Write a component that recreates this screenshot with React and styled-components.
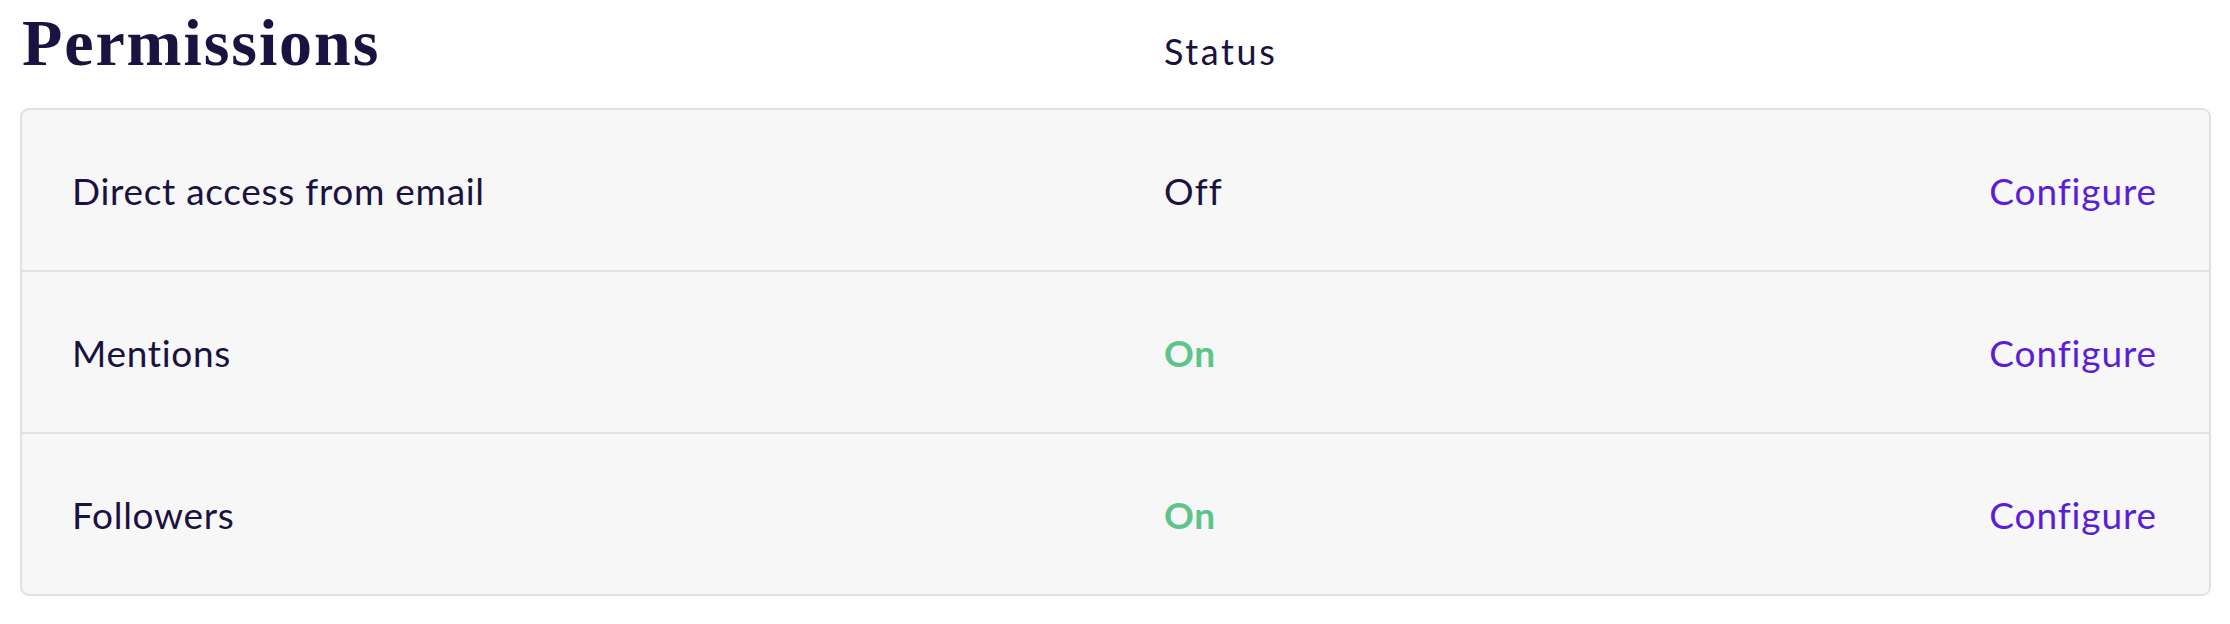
import React from "react";
import styled, { createGlobalStyle } from "styled-components";

const GlobalStyle = createGlobalStyle`
  html, body {
    margin: 0;
    padding: 0;
    background: #ffffff;
  }
  body {
    font-family: "Lato", "Liberation Sans", sans-serif;
    color: #1a1240;
  }
`;

const NAME_COL = 1092;
const ROW_PAD_LEFT = 50;
const BORDER = 2;

const Page = styled.div`
  padding: 0 19px 0 20px;
`;

const Header = styled.header`
  display: grid;
  grid-template-columns: ${NAME_COL + ROW_PAD_LEFT + BORDER}px 1fr;
  align-items: baseline;
  height: 108px;
  box-sizing: border-box;
  padding-top: 3px;
`;

const Title = styled.h1`
  margin: 0;
  padding-left: 2px;
  font-family: "Liberation Serif", "Times New Roman", serif;
  font-weight: 700;
  font-size: 66px;
  letter-spacing: 1.9px;
  line-height: 80px;
  color: #1a1240;
`;

const ColumnLabel = styled.span`
  font-family: "Lato", "Liberation Sans", sans-serif;
  font-size: 36px;
  letter-spacing: 2.6px;
  color: #1a1240;
`;

const Table = styled.div`
  border: ${BORDER}px solid #e1e1e1;
  border-radius: 9px;
  background: #f7f7f7;
  overflow: hidden;
`;

const Row = styled.div`
  display: grid;
  grid-template-columns: ${NAME_COL}px 1fr auto;
  align-items: center;
  height: 160px;
  padding: 0 52px 0 ${ROW_PAD_LEFT}px;
  & + & {
    border-top: 2px solid #e1e1e1;
  }
`;

const Name = styled.span`
  font-size: 37px;
  letter-spacing: 0.7px;
  color: #1a1240;
`;

const Status = styled.span`
  font-size: 37px;
  letter-spacing: ${(p) => (p.$on ? "0.6px" : "1.2px")};
  font-weight: ${(p) => (p.$on ? 700 : 400)};
  color: ${(p) => (p.$on ? "#5ec48a" : "#1a1240")};
`;

const ConfigureLink = styled.a`
  font-size: 37px;
  letter-spacing: 0.9px;
  color: #5b1ed8;
  text-decoration: none;
  cursor: pointer;
`;

const permissions = [
  { name: "Direct access from email", on: false },
  { name: "Mentions", on: true },
  { name: "Followers", on: true },
];

export default function App() {
  return (
    <>
      <GlobalStyle />
      <Page>
        <Header>
          <Title>Permissions</Title>
          <ColumnLabel>Status</ColumnLabel>
        </Header>
        <Table>
          {permissions.map((p) => (
            <Row key={p.name}>
              <Name>{p.name}</Name>
              <Status $on={p.on}>{p.on ? "On" : "Off"}</Status>
              <ConfigureLink>Configure</ConfigureLink>
            </Row>
          ))}
        </Table>
      </Page>
    </>
  );
}
